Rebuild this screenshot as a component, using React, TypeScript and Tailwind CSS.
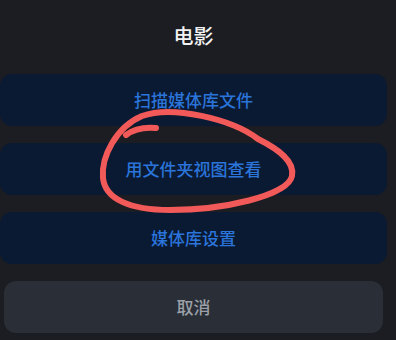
import React from 'react';

const actions = ['扫描媒体库文件', '用文件夹视图查看', '媒体库设置'];

const App: React.FC = () => {
    return (
        <div
            className="relative w-[396px] h-[340px] overflow-hidden bg-[#1b1d22]"
            style={{ fontFamily: '"Noto Sans CJK SC", "Noto Sans", sans-serif' }}
        >
            <div className="pr-[9px]">
                {/* Title */}
                <div className="pt-[22px] text-center text-[20px] leading-[27px] font-medium text-[#f2f2f2]">
                    电影
                </div>

                {/* Action list */}
                <div className="mt-[25px] flex flex-col gap-[17px]">
                    {actions.map((label) => (
                        <button
                            key={label}
                            className="h-[52px] w-full rounded-[12px] bg-[#0a1a32] text-[17px] font-medium text-[#2a74da]"
                        >
                            {label}
                        </button>
                    ))}
                    <button className="mx-[4px] h-[52px] rounded-[12px] bg-[#2a2e36] text-[17px] font-medium text-[#9ba0a8]">
                        取消
                    </button>
                </div>
            </div>

            {/* Hand-drawn annotation over the second button */}
            <svg
                className="pointer-events-none absolute left-0 top-0"
                width="396"
                height="340"
                viewBox="0 0 396 340"
                fill="none"
            >
                <path
                    d="M258 139 C232 119 172 105 142 116 C116 127 101 157 103 178 C105 199 130 210 170 210 C222 210 288 196 292 176 C295 161 278 149 258 139"
                    stroke="#f25a5a"
                    strokeWidth="6"
                    strokeLinecap="round"
                    strokeLinejoin="round"
                />
                <path
                    d="M156 128 C145 127 134 129 126 135"
                    stroke="#f25a5a"
                    strokeWidth="6"
                    strokeLinecap="round"
                />
            </svg>
        </div>
    );
};

export default App;
